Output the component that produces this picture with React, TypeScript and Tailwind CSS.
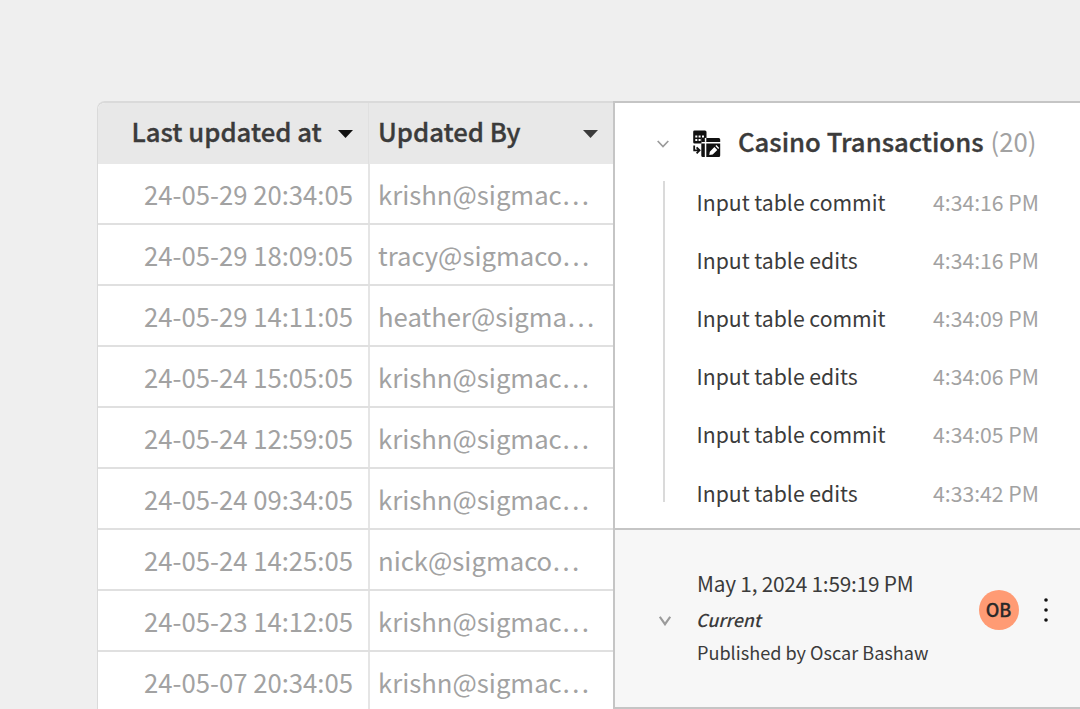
const rows = [
  { updatedAt: "24-05-29 20:34:05", updatedBy: "krishn@sigmac…" },
  { updatedAt: "24-05-29 18:09:05", updatedBy: "tracy@sigmaco…" },
  { updatedAt: "24-05-29 14:11:05", updatedBy: "heather@sigma…" },
  { updatedAt: "24-05-24 15:05:05", updatedBy: "krishn@sigmac…" },
  { updatedAt: "24-05-24 12:59:05", updatedBy: "krishn@sigmac…" },
  { updatedAt: "24-05-24 09:34:05", updatedBy: "krishn@sigmac…" },
  { updatedAt: "24-05-24 14:25:05", updatedBy: "nick@sigmaco…" },
  { updatedAt: "24-05-23 14:12:05", updatedBy: "krishn@sigmac…" },
  { updatedAt: "24-05-07 20:34:05", updatedBy: "krishn@sigmac…" },
]

const edits = [
  { label: "Input table commit", time: "4:34:16 PM" },
  { label: "Input table edits", time: "4:34:16 PM" },
  { label: "Input table commit", time: "4:34:09 PM" },
  { label: "Input table edits", time: "4:34:06 PM" },
  { label: "Input table commit", time: "4:34:05 PM" },
  { label: "Input table edits", time: "4:33:42 PM" },
]

function Caret({ className }: { className: string }) {
  return (
    <svg viewBox="0 0 15 8" className={`h-2 w-[15px] shrink-0 ${className}`} fill="currentColor">
      <path d="M0 0h15L7.5 8z" />
    </svg>
  )
}

function InputTableIcon() {
  return (
    <svg viewBox="0 0 28 28" className="h-7 w-7 shrink-0">
      <path d="M1.5 .5h10.5a1.5 1.5 0 0 1 1.5 1.5v6h-5v5.5h-7a1.3 1.3 0 0 1-1.3-1.3v-10.4a1.3 1.3 0 0 1 1.3-1.3z" fill="#111" />
      <path d="M2.3 5.5h2v2h-2zM5.6 5.5h2v2h-2zM9 5.5h2v2h-2zM2.3 9h2v2h-2zM5.6 9h2v2h-2z" fill="#fff" />
      <path d="M1.2 15.5v4.8h4.5M3.6 17.3l3 3-3 3" fill="none" stroke="#111" strokeWidth="1.8" />
      <path d="M8.3 7.9h17.4a1.5 1.5 0 0 1 1.5 1.5v2.5h-18.9zM8.3 13.4h3.5v13.6h-2a1.5 1.5 0 0 1-1.5-1.5zM13.3 13.4h13.9v12.1a1.5 1.5 0 0 1-1.5 1.5h-12.4z" fill="#111" />
      <path d="M11.8 7.9h1.5v4h-1.5z" fill="#fff" />
      <path d="M16.3 25l.5-3.3 4.6-4.6 2.9 2.9-4.6 4.6zM22.4 16.1l1-1 2.8 2.8-1 1z" fill="#fff" />
    </svg>
  )
}

function HistoryTable() {
  return (
    <div className="w-[516px] shrink-0 rounded-tl-lg border-t-2 border-l border-[#dadada] bg-white overflow-hidden">
      <div className="flex h-[61px] bg-[#e8e8e8] text-[25.7px] font-medium text-[#3b3b3b] [-webkit-text-stroke:0.35px]">
        <div className="flex w-[271px] items-center justify-between border-r border-[#e0e0e0] pl-[33.5px] pr-[15px]">
          <span className="pb-1.5 leading-[55px]">Last updated at</span>
          <Caret className="text-[#111]" />
        </div>
        <div className="flex flex-1 items-center justify-between pl-[9px] pr-[15px]">
          <span className="pb-1.5 leading-[55px]">Updated By</span>
          <Caret className="text-[#3b3b3b]" />
        </div>
      </div>
      {rows.map((row, i) => (
        <div key={i} className="flex h-[61px] border-b-2 border-[#e0e0e0] text-[25.7px] leading-[59px] text-[#a2a2a2] whitespace-nowrap">
          <div className="w-[272px] border-r-2 border-[#e5e5e5] pr-[15px] text-right">{row.updatedAt}</div>
          <div className="flex-1 pl-2">{row.updatedBy}</div>
        </div>
      ))}
    </div>
  )
}

function VersionPanel() {
  return (
    <div className="flex h-[608px] flex-1 flex-col border-t-2 border-b-2 border-l-2 border-[#c5c5c5] bg-white whitespace-nowrap text-[#3b3b3b]">
      <div className="h-[425px] pt-[17px]">
        <div className="flex h-12 items-center pl-[42px]">
          <svg viewBox="0 0 12 8" className="h-2 w-3 shrink-0" fill="none" stroke="#9b9b9b" strokeWidth="1.7">
            <path d="M.7 1l5.3 5.5L11.3 1" />
          </svg>
          <div className="ml-6">
            <InputTableIcon />
          </div>
          <span className="ml-[17px] pb-1.5 text-[25.7px] font-medium [-webkit-text-stroke:0.35px]">Casino Transactions</span>
          <span className="ml-[7px] pb-1.5 text-[25.7px] text-[#a2a2a2]">(20)</span>
        </div>
        <div className="mt-[13px] ml-[48px] h-[321px] w-0.5 bg-[#dadada]">
          <div className="w-[376px] -translate-y-[8px] pl-[33.5px]">
            {edits.map((edit, i) => (
              <div key={i} className="flex h-[58.12px] justify-between text-[21.2px] leading-[57px]">
                <span>{edit.label}</span>
                <span className="text-[#a2a2a2]">{edit.time}</span>
              </div>
            ))}
          </div>
        </div>
      </div>
      <div className="flex flex-1 items-center border-t-2 border-[#c5c5c5] bg-[#f7f7f7] pl-11">
        <svg viewBox="0 0 12 10" className="mt-[5px] h-2.5 w-3 shrink-0" fill="none" stroke="#9b9b9b" strokeWidth="2.2">
          <path d="M.8 .8L6 8.2 11.2 .8" />
        </svg>
        <div className="ml-[26px] w-[282px] pb-1.5">
          <div className="text-[20.8px] leading-9 tracking-[-0.2px]">May 1, 2024 1:59:19 PM</div>
          <div className="-ml-px text-[17.8px] leading-9 font-medium italic">Current</div>
          <div className="text-[18.1px] leading-[30px]">Published by Oscar Bashaw</div>
        </div>
        <div className="mb-[17px] flex h-10 w-10 items-center justify-center rounded-full bg-[#ff9b74] pr-px pb-0.5 text-[18px] font-medium text-[#292929] [-webkit-text-stroke:0.3px]">OB</div>
        <svg viewBox="0 0 6 26" className="mb-[18px] ml-6 h-[26px] w-1.5" fill="#111">
          <circle cx="3" cy="3" r="1.8" />
          <circle cx="3" cy="13" r="1.8" />
          <circle cx="3" cy="23" r="1.8" />
        </svg>
      </div>
    </div>
  )
}

export default function App() {
  return (
    <div className="flex h-[709px] w-[1080px] overflow-hidden bg-[#efefef] pt-[101px] pl-[97px] font-['Noto_Sans_CJK_SC',sans-serif]">
      <HistoryTable />
      <VersionPanel />
    </div>
  )
}
